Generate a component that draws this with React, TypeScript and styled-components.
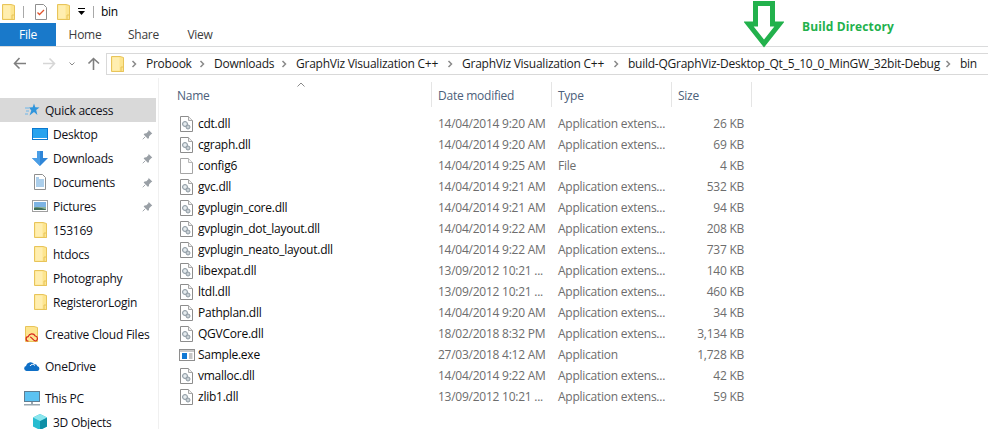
import React from "react";
import styled, { createGlobalStyle } from "styled-components";

const Global = createGlobalStyle`
  html, body { margin: 0; padding: 0; background: #fff; }
  body { font-family: "Open Sans", "Noto Sans", sans-serif; font-size: 12px; color: #000; overflow: hidden; }
`;

const Window = styled.div`
  position: relative;
  width: 988px;
  height: 429px;
  overflow: hidden;
  letter-spacing: -0.25px;
`;

const TitleBar = styled.div`
  display: flex;
  align-items: center;
  height: 23px;
  padding-left: 2px;
`;

const TitleDivider = styled.span`
  width: 1px;
  height: 12px;
  background: #a8a8a8;
  margin: 0 ${(p: { $r?: number }) => p.$r ?? 11}px 0 8px;
`;

const TitleGap = styled.span<{ $w: number }>`
  width: ${(p) => p.$w}px;
`;

const TitleText = styled.span`
  font-size: 12px;
`;

const TabBar = styled.div`
  display: flex;
  height: 23px;
  border-bottom: 1px solid #dadbdc;
`;

const Tab = styled.div<{ $w: number; $active?: boolean }>`
  width: ${(p) => p.$w}px;
  display: flex;
  align-items: center;
  justify-content: center;
  font-size: 12px;
  color: ${(p) => (p.$active ? "#fff" : "#3c3c3c")};
  background: ${(p) => (p.$active ? "#1979ca" : "transparent")};
`;

const NavRow = styled.div`
  display: flex;
  align-items: center;
  box-sizing: border-box;
  height: 31px;
  padding: 2px 0 0 12px;
`;

const NavButton = styled.span<{ $w: number; $ml?: number }>`
  width: ${(p) => p.$w}px;
  margin-left: ${(p) => p.$ml ?? 0}px;
  flex: none;
  display: flex;
  justify-content: center;
`;

const AddressBox = styled.div`
  flex: 1;
  height: 20px;
  margin-left: 6px;
  display: flex;
  align-items: center;
  padding-left: 4px;
  border: 1px solid #d9d9d9;
  border-right: none;
  white-space: nowrap;
`;

const AddressFolder = styled.span`
  display: flex;
  margin-right: 6px;
`;

const Crumb = styled.span<{ $w: number }>`
  display: flex;
  align-items: center;
  flex: none;
  width: ${(p) => p.$w}px;
  color: #1a1a1a;
`;

const CrumbChevron = styled.span`
  width: 15px;
  padding-left: 1px;
  flex: none;
  display: flex;
`;

const Body = styled.div`
  display: flex;
  height: 351px;
`;

const Sidebar = styled.nav`
  width: 158px;
  flex: none;
  padding-top: 20px;
  border-right: 1px solid #f0f0f0;
`;

const NavItem = styled.div<{ $indent: number; $selected?: boolean; $gap?: number }>`
  display: flex;
  align-items: center;
  height: 24px;
  width: 156px;
  box-sizing: border-box;
  padding-left: ${(p) => p.$indent}px;
  margin-top: ${(p) => p.$gap ?? 0}px;
  background: ${(p) => (p.$selected ? "#d9d9d9" : "transparent")};
  color: #101018;
`;

const NavIcon = styled.span`
  width: 16px;
  height: 16px;
  flex: none;
  margin-right: 5px;
  display: flex;
  align-items: center;
  justify-content: center;
`;

const NavLabel = styled.span`
  flex: 1;
`;

const PinSlot = styled.span`
  width: 11px;
  margin-right: 3px;
  display: flex;
`;

const Main = styled.main`
  flex: 1;
  position: relative;
`;

const SortCaret = styled.svg`
  position: absolute;
  left: 138px;
  top: 4px;
`;

const HeaderRow = styled.div`
  display: grid;
  grid-template-columns: 273px 120px 120px 80px;
  height: 25px;
  margin-top: 4px;
`;

const HeaderCell = styled.div<{ $first?: boolean }>`
  display: flex;
  align-items: center;
  padding: 1px 0 0 ${(p) => (p.$first ? 18 : 6)}px;
  border-right: 1px solid #e5e5e5;
  color: #4c607a;
`;

const Rows = styled.div`
  margin-top: 6px;
`;

const Row = styled.div`
  display: grid;
  grid-template-columns: 273px 120px 120px 72px;
  height: 21px;
  align-items: center;
`;

const NameCell = styled.div`
  display: flex;
  align-items: center;
  padding-left: 21px;
  color: #0a0a0a;
`;

const FileIconSlot = styled.span`
  width: 13px;
  height: 16px;
  margin-right: 5px;
  display: flex;
  align-items: center;
  justify-content: center;
  svg { flex: none; }
`;

const MetaCell = styled.div<{ $right?: boolean }>`
  color: #6d6d6d;
  padding-left: ${(p) => (p.$right ? 0 : 6)}px;
  text-align: ${(p) => (p.$right ? "right" : "left")};
  white-space: nowrap;
`;

const Annotation = styled.div`
  position: absolute;
  left: 802px;
  top: 18px;
  color: #22b14c;
  font-weight: 700;
  font-size: 12px;
  letter-spacing: 0.12px;
`;

const ArrowMark = styled.svg`
  position: absolute;
  left: 744px;
  top: 0;
`;

const ArrowSvg = styled.svg<{ $rot: number }>`
  transform: rotate(${(p) => p.$rot}deg);
`;

const Folder = () => (
  <svg width="13" height="16" viewBox="0 0 13 16">
    <path d="M.5.5h8.500l3.500 1v14H.5z" fill="#fde58f" stroke="#e8c45a" />
    <path d="M1.500 1.500h7v13h-7z" fill="#ffeeb0" />
    <path d="M10 11h2.500v4.500H10z" fill="#fde58f" stroke="#e8c45a" />
  </svg>
);

const Chevron = () => (
  <svg width="6" height="8" viewBox="0 0 6 8">
    <path d="M1.500 1l3 3-3 3" fill="none" stroke="#8a8a8a" strokeWidth="1.500" />
  </svg>
);

const DllIcon = () => (
  <svg width="13" height="16" viewBox="0 0 13 16">
    <path d="M.5.5h8l4 4v11H.5z" fill="#fff" stroke="#8d8d8d" />
    <path d="M8.500.5v4h4" fill="#eee" stroke="#a8a8a8" />
    <circle cx="5" cy="8" r="2.500" fill="#d5dde2" stroke="#8f9aa3" />
    <circle cx="8" cy="11" r="2" fill="#c8d0d5" stroke="#8f9aa3" />
    <circle cx="5" cy="8" r=".8" fill="#fff" />
  </svg>
);

const BlankIcon = () => (
  <svg width="13" height="16" viewBox="0 0 13 16">
    <path d="M.5.5h8l4 4v11H.5z" fill="#fff" stroke="#a5a5a5" />
    <path d="M8.500.5v4h4" fill="#f3f3f3" stroke="#b8b8b8" />
  </svg>
);

const ExeIcon = () => (
  <svg width="16" height="12" viewBox="0 0 16 12">
    <rect x=".5" y=".5" width="15" height="11" fill="#fff" stroke="#8e8e8e" />
    <rect x="1" y="1" width="14" height="2" fill="#c9c9c9" />
    <rect x="3" y="4" width="5" height="6" fill="#0f78d4" />
    <path d="M10 5h3.500M10 7h3.500M10 9h3.500" stroke="#8e8e8e" />
  </svg>
);

const Pin = () => (
  <svg width="11" height="11" viewBox="0 0 12 12">
    <path d="M7 .8l4.200 4.200-1.200.6-2.200 2.400-.3 2-1.200.6L1.800 6l1-1.100 2-.3 2.400-2.400z" fill="#9aa0a6" />
    <path d="M3.500 8.500L.8 11.200" stroke="#9aa0a6" />
  </svg>
);

const StarIcon = () => (
  <svg width="16" height="14" viewBox="0 0 16 14">
    <path d="M10 .5l1.300 3.800 4.200.1-3.300 2.500 1.200 5.100-3.400-2.900-4.500 3.400 1.800-5.100L5 4.400l3.700-.1z" fill="#2f95dc" />
    <path d="M1 5h4M2 8h3M1 11h3" stroke="#6db6ea" />
  </svg>
);

const DesktopIcon = () => (
  <svg width="16" height="12" viewBox="0 0 16 12">
    <rect width="16" height="12" fill="#0a78d0" />
    <rect x="1" y="1" width="14" height="9" fill="#27a3ee" />
    <path d="M1 10.500h14" stroke="#fff" />
  </svg>
);

const DownloadIcon = () => (
  <svg width="16" height="15" viewBox="0 0 16 15">
    <path d="M5 0h6v7h5l-8 8-8-8h5z" fill="#2f86d8" />
    <path d="M5 0h3v15L0 7h5z" fill="#4a9ee6" />
  </svg>
);

const DocumentsIcon = () => (
  <svg width="12" height="16" viewBox="0 0 12 16">
    <path d="M.5.5h8l3 3v12H.5z" fill="#fff" stroke="#8f8f8f" />
    <path d="M2 4h3M2 6h8M2 8h8M2 10h8M2 12h8" stroke="#5a9fd8" />
  </svg>
);

const PicturesIcon = () => (
  <svg width="16" height="12" viewBox="0 0 16 12">
    <rect x=".5" y=".5" width="15" height="11" fill="#fff" stroke="#a0a0a0" />
    <rect x="2" y="2" width="12" height="5" fill="#7db4e4" />
    <path d="M2 7h12v3H2z" fill="#8fb49c" />
    <path d="M2 8c4-1 8 0 12 1.500v.5H2z" fill="#3f6e58" />
  </svg>
);

const CloudFolderIcon = () => (
  <svg width="14" height="16" viewBox="0 0 14 16">
    <path d="M.5.5h8.500l3.500 1v14H.5z" fill="#fde58f" stroke="#e8c45a" />
    <path d="M3.500 15a2.200 2.200 0 0 1-.3-4.400 3.800 3.800 0 0 1 7-.6 2.600 2.600 0 0 1 .6 5c-2.800 0-3.600-4-5.800-4" fill="none" stroke="#d7261e" strokeWidth="1.200" />
  </svg>
);

const OneDriveIcon = () => (
  <svg width="16" height="10" viewBox="0 0 16 10">
    <path d="M2.500 10a2.500 2.500 0 0 1-.5-4.900A4.500 4.500 0 0 1 10 3a3.500 3.500 0 0 1 3.500 2.300A2.400 2.400 0 0 1 13.500 10z" fill="#0f6fc6" />
    <path d="M6 5a3 3 0 0 1 5-.5" fill="none" stroke="#fff" />
  </svg>
);

const PcIcon = () => (
  <svg width="16" height="15" viewBox="0 0 16 15">
    <rect x=".5" y=".5" width="15" height="10" fill="#5cc2f2" stroke="#5f7d92" />
    <path d="M7 11h2v2H7z" fill="#9aa7b0" />
    <rect y="13" width="16" height="1.500" fill="#9aa7b0" />
  </svg>
);

const CubeIcon = () => (
  <svg width="16" height="16" viewBox="0 0 16 16">
    <path d="M8 0l7 3.500v9L8 16 1 12.500v-9z" fill="#28bcd0" />
    <path d="M8 7l7-3.500v9L8 16z" fill="#0e8fa6" />
    <path d="M8 0l7 3.500L8 7 1 3.500z" fill="#8be6ee" />
  </svg>
);

const ChecklistIcon = () => (
  <svg width="12" height="16" viewBox="0 0 12 16">
    <path d="M.5.5h8l3 3v12H.5z" fill="#fff" stroke="#8f8f8f" />
    <path d="M2.500 8.500l2 2 4.500-4.500" fill="none" stroke="#e0522c" strokeWidth="1.300" />
  </svg>
);

const QuickDown = () => (
  <svg width="7" height="8" viewBox="0 0 7 8">
    <rect width="7" height="1" fill="#000" />
    <path d="M0 3h7L3.500 7z" fill="#000" />
  </svg>
);

const NavArrow = ({ rot, color }: { rot: number; color: string }) => (
  <ArrowSvg $rot={rot} width="13" height="13" viewBox="0 0 13 13">
    <path d="M6.500 1L1.500 6.500l5 5M1.500 6.500H13" fill="none" stroke={color} strokeWidth="1.600" />
  </ArrowSvg>
);

const crumbs = [
  { label: "Probook", w: 52 },
  { label: "Downloads", w: 66 },
  { label: "GraphViz Visualization C++", w: 150 },
  { label: "GraphViz Visualization C++", w: 150 },
  { label: "build-QGraphViz-Desktop_Qt_5_10_0_MinGW_32bit-Debug", w: 316 },
  { label: "bin", w: 24 },
];

type NavEntry = { label: string; icon: React.ReactNode; indent: number; pin?: boolean; selected?: boolean; gap?: number };

const navItems: NavEntry[] = [
  { label: "Quick access", icon: <StarIcon />, indent: 24, selected: true },
  { label: "Desktop", icon: <DesktopIcon />, indent: 32, pin: true },
  { label: "Downloads", icon: <DownloadIcon />, indent: 32, pin: true },
  { label: "Documents", icon: <DocumentsIcon />, indent: 32, pin: true },
  { label: "Pictures", icon: <PicturesIcon />, indent: 32, pin: true },
  { label: "153169", icon: <Folder />, indent: 32 },
  { label: "htdocs", icon: <Folder />, indent: 32 },
  { label: "Photography", icon: <Folder />, indent: 32 },
  { label: "RegisterorLogin", icon: <Folder />, indent: 32 },
  { label: "Creative Cloud Files", icon: <CloudFolderIcon />, indent: 24, gap: 8 },
  { label: "OneDrive", icon: <OneDriveIcon />, indent: 24, gap: 8 },
  { label: "This PC", icon: <PcIcon />, indent: 24, gap: 8 },
  { label: "3D Objects", icon: <CubeIcon />, indent: 32 },
];

const APP_EXT = "Application extens...";

const files = [
  { name: "cdt.dll", date: "14/04/2014 9:20 AM", type: APP_EXT, size: "26 KB" },
  { name: "cgraph.dll", date: "14/04/2014 9:20 AM", type: APP_EXT, size: "69 KB" },
  { name: "config6", date: "14/04/2014 9:25 AM", type: "File", size: "4 KB", kind: "blank" },
  { name: "gvc.dll", date: "14/04/2014 9:21 AM", type: APP_EXT, size: "532 KB" },
  { name: "gvplugin_core.dll", date: "14/04/2014 9:21 AM", type: APP_EXT, size: "94 KB" },
  { name: "gvplugin_dot_layout.dll", date: "14/04/2014 9:22 AM", type: APP_EXT, size: "208 KB" },
  { name: "gvplugin_neato_layout.dll", date: "14/04/2014 9:22 AM", type: APP_EXT, size: "737 KB" },
  { name: "libexpat.dll", date: "13/09/2012 10:21 ...", type: APP_EXT, size: "140 KB" },
  { name: "ltdl.dll", date: "13/09/2012 10:21 ...", type: APP_EXT, size: "460 KB" },
  { name: "Pathplan.dll", date: "14/04/2014 9:20 AM", type: APP_EXT, size: "34 KB" },
  { name: "QGVCore.dll", date: "18/02/2018 8:32 PM", type: APP_EXT, size: "3,134 KB" },
  { name: "Sample.exe", date: "27/03/2018 4:12 AM", type: "Application", size: "1,728 KB", kind: "exe" },
  { name: "vmalloc.dll", date: "14/04/2014 9:22 AM", type: APP_EXT, size: "42 KB" },
  { name: "zlib1.dll", date: "13/09/2012 10:21 ...", type: APP_EXT, size: "59 KB" },
];

const iconFor = (kind?: string) =>
  kind === "blank" ? <BlankIcon /> : kind === "exe" ? <ExeIcon /> : <DllIcon />;

export default function App() {
  return (
    <Window>
      <Global />
      <TitleBar>
        <Folder />
        <TitleDivider />
        <ChecklistIcon />
        <TitleGap $w={10} />
        <Folder />
        <TitleGap $w={8} />
        <QuickDown />
        <TitleDivider $r={7} />
        <TitleText>bin</TitleText>
      </TitleBar>
      <TabBar>
        <Tab $w={56} $active>File</Tab>
        <Tab $w={58}>Home</Tab>
        <Tab $w={59}>Share</Tab>
        <Tab $w={54}>View</Tab>
      </TabBar>
      <NavRow>
        <NavButton $w={14}><NavArrow rot={0} color="#7f7f7f" /></NavButton>
        <NavButton $w={14} $ml={16}><NavArrow rot={180} color="#d6d6d6" /></NavButton>
        <NavButton $w={6} $ml={13}>
          <svg width="6" height="4" viewBox="0 0 6 4">
            <path d="M.5.5L3 3 5.500.5" fill="none" stroke="#8a8a8a" />
          </svg>
        </NavButton>
        <NavButton $w={14} $ml={11}><NavArrow rot={90} color="#7f7f7f" /></NavButton>
        <AddressBox>
          <AddressFolder><Folder /></AddressFolder>
          {crumbs.map((c) => (
            <React.Fragment key={c.label + c.w}>
              <CrumbChevron><Chevron /></CrumbChevron>
              <Crumb $w={c.w}>{c.label}</Crumb>
            </React.Fragment>
          ))}
        </AddressBox>
      </NavRow>
      <Body>
        <Sidebar>
          {navItems.map((n) => (
            <NavItem key={n.label} $indent={n.indent} $selected={n.selected} $gap={n.gap}>
              <NavIcon>{n.icon}</NavIcon>
              <NavLabel>{n.label}</NavLabel>
              {n.pin && <PinSlot><Pin /></PinSlot>}
            </NavItem>
          ))}
        </Sidebar>
        <Main>
          <SortCaret width="8" height="5" viewBox="0 0 8 5">
            <path d="M.5 4.500L4 1l3.500 3.500" fill="none" stroke="#8a8a8a" />
          </SortCaret>
          <HeaderRow>
            <HeaderCell $first>Name</HeaderCell>
            <HeaderCell>Date modified</HeaderCell>
            <HeaderCell>Type</HeaderCell>
            <HeaderCell>Size</HeaderCell>
          </HeaderRow>
          <Rows>
            {files.map((f) => (
              <Row key={f.name}>
                <NameCell>
                  <FileIconSlot>{iconFor(f.kind)}</FileIconSlot>
                  {f.name}
                </NameCell>
                <MetaCell>{f.date}</MetaCell>
                <MetaCell>{f.type}</MetaCell>
                <MetaCell $right>{f.size}</MetaCell>
              </Row>
            ))}
          </Rows>
        </Main>
      </Body>
      <ArrowMark width="40" height="48" viewBox="0 0 40 48">
        <path d="M11.500 3.500h17v20.500h7L20 43.500 4.500 24h7z" fill="#fff" stroke="#22b14c" strokeWidth="5" />
      </ArrowMark>
      <Annotation>Build Directory</Annotation>
    </Window>
  );
}
